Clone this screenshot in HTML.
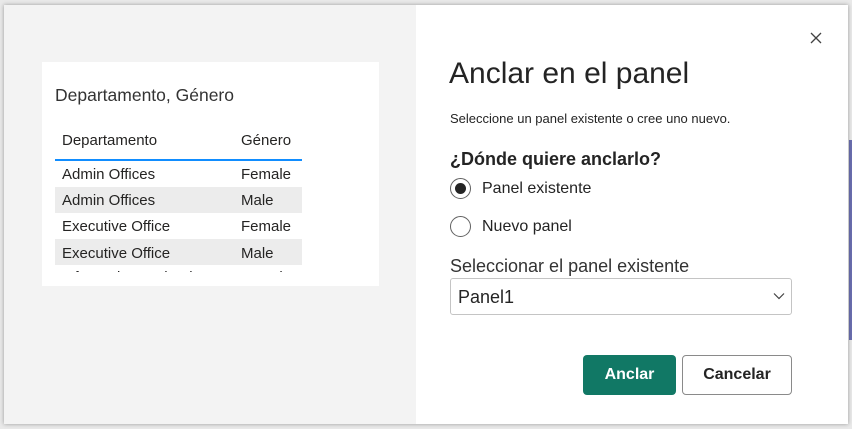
<!DOCTYPE html>
<html><head><style>
*{margin:0;padding:0;box-sizing:border-box}
body{width:852px;height:429px;background:#e9e9e9;font-family:"Liberation Sans",sans-serif;position:relative;overflow:hidden;color:#242424}
.abs{position:absolute}
#dlg{left:4px;top:5px;width:844px;height:419px;background:#fff;box-shadow:0 0 4px rgba(0,0,0,.35)}
#left{left:0;top:0;width:412px;height:419px;background:#f3f3f3}
#card{left:38px;top:57px;width:337px;height:224px;background:#fff;overflow:hidden}
.t{font-size:15px;color:#252423;white-space:nowrap}
.row{position:absolute;left:13px;width:247px;height:26px}
.g{background:#ececec}
.radio{width:21px;height:21px;border-radius:50%;border:1px solid #616161;background:#fff}
.btn{border-radius:4px;font-weight:bold;font-size:16px;text-align:center;line-height:37px}
</style></head><body>
<div class="abs" style="left:849px;top:140px;width:3px;height:200px;background:#6b6fb0"></div>
<div id="dlg" class="abs">
 <div id="left" class="abs">
  <div id="card" class="abs">
   <div class="abs t" style="left:13px;top:23px;font-size:17.5px;color:#333">Departamento, Género</div>
   <div class="abs t" style="left:20px;top:70px">Departamento</div>
   <div class="abs t" style="left:199px;top:70px">Género</div>
   <div class="abs" style="left:13px;top:97px;width:247px;height:2px;background:#118dff"></div>
   <div class="row g" style="top:125px"></div>
   <div class="row g" style="top:177px"></div>
   <div class="abs t" style="left:20px;top:104px">Admin Offices</div>
   <div class="abs t" style="left:199px;top:104px">Female</div>
   <div class="abs t" style="left:20px;top:130px">Admin Offices</div>
   <div class="abs t" style="left:199px;top:130px">Male</div>
   <div class="abs t" style="left:20px;top:156px">Executive Office</div>
   <div class="abs t" style="left:199px;top:156px">Female</div>
   <div class="abs t" style="left:20px;top:183px">Executive Office</div>
   <div class="abs t" style="left:199px;top:183px">Male</div>
   <div class="abs" style="left:13px;top:207px;width:247px;height:3px;overflow:hidden"><div class="t" style="position:absolute;left:7px;top:0;">Information Technology</div><div class="t" style="position:absolute;left:186px;top:0">Female</div></div>
  </div>
 </div>
 <svg class="abs" style="left:806px;top:27px" width="12" height="12" viewBox="0 0 12 12"><path d="M1 1L11 11M11 1L1 11" stroke="#424242" stroke-width="1.3"/></svg>
 <div class="abs" style="left:445px;top:52px;font-size:30px;white-space:nowrap">Anclar en el panel</div>
 <div class="abs" style="left:446px;top:106px;font-size:13px">Seleccione un panel existente o cree uno nuevo.</div>
 <div class="abs" style="left:446px;top:144px;font-size:18px;font-weight:bold">¿Dónde quiere anclarlo?</div>
 <div class="abs radio" style="left:446px;top:173px"><div class="abs" style="left:4px;top:4px;width:11px;height:11px;border-radius:50%;background:#242424"></div></div>
 <div class="abs" style="left:478px;top:175px;font-size:16px">Panel existente</div>
 <div class="abs radio" style="left:446px;top:211px"></div>
 <div class="abs" style="left:478px;top:213px;font-size:16px">Nuevo panel</div>
 <div class="abs" style="left:446px;top:251px;font-size:18px;color:#333">Seleccionar el panel existente</div>
 <div class="abs" style="left:446px;top:273px;width:342px;height:37px;border:1px solid #c4c4c4;border-radius:3px"></div>
 <div class="abs" style="left:454px;top:282px;font-size:18px">Panel1</div>
 <svg class="abs" style="left:769px;top:287px" width="12" height="8" viewBox="0 0 12 8"><path d="M1 1.5L6 6.5L11 1.5" fill="none" stroke="#424242" stroke-width="1.2"/></svg>
 <div class="abs btn" style="left:579px;top:350px;width:93px;height:40px;background:#117865;color:#fff;line-height:40px">Anclar</div>
 <div class="abs btn" style="left:678px;top:350px;width:110px;height:40px;border:1px solid #8a8a8a;background:#fff;line-height:38px">Cancelar</div>
</div>
</body></html>
